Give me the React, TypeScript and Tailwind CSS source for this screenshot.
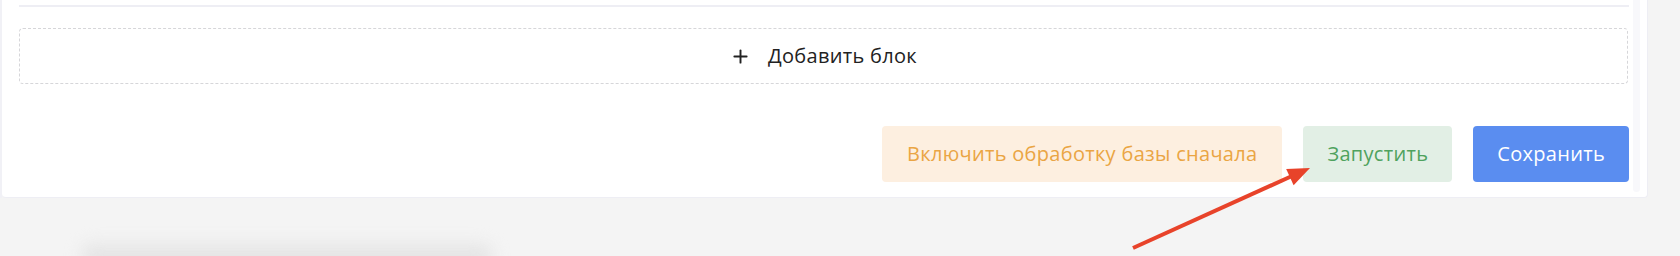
import { Plus } from "lucide-react";

const font = { fontFamily: '"Open Sans", "Noto Sans", sans-serif' };

export default function App() {
  return (
    <div className="relative h-[256px] overflow-hidden bg-[#f4f4f4]" style={font}>
      {/* left edge strip */}
      <div className="absolute left-0 top-0 h-[198px] w-[2px] bg-[#f1f1f6]" />

      {/* Card */}
      <div className="ml-[2px] flex h-[198px] w-[1646px] rounded-b-[4px] border-r border-b border-[#eeeef4] bg-white">
        <div className="flex w-[1628px] flex-col pl-[17px] pr-[1px]">
          <div className="mt-[5px] h-[2px] w-full bg-[#eeeef4]" />

          {/* Add block */}
          <button className="mt-[21px] flex h-[56px] w-[1609px] items-center justify-center gap-[17px] rounded-[4px] border border-dashed border-[#d6d6d9] text-[20px] tracking-[0.3px] text-[#222]">
            <Plus className="h-[21px] w-[21px]" strokeWidth={2.2} />
            <span>Добавить блок</span>
          </button>

          {/* Actions */}
          <div className="mt-[42px] flex justify-end gap-[21px]">
            <button className="h-[56px] rounded-[4px] bg-[#fdefe0] px-[25px] text-[20px] tracking-[0.3px] text-[#eaa544]">
              Включить обработку базы сначала
            </button>
            <button className="h-[56px] rounded-[4px] bg-[#e2efe5] px-[24px] text-[20px] tracking-[0.3px] text-[#4fa25e]">
              Запустить
            </button>
            <button className="h-[56px] rounded-[4px] bg-[#5a8df0] px-[24px] text-[20px] tracking-[0.3px] text-white">
              Сохранить
            </button>
          </div>
        </div>

        {/* scrollbar track */}
        <div className="ml-[3px] mb-[5px] w-[7px] rounded-b-[4px] bg-[#f8f8fb]" />
      </div>

      {/* blurred next element */}
      <div className="ml-[82px] mt-[46px] h-[26px] w-[410px] rounded-[10px] bg-[#e5e5e5] blur-[8px]" />

      {/* annotation arrow */}
      <svg
        className="absolute left-[1120px] top-[160px]"
        width="200"
        height="96"
        viewBox="0 0 200 96"
      >
        <line x1="13" y1="88" x2="172" y2="16" stroke="#e8432a" strokeWidth="4" strokeLinecap="butt" />
        <polygon points="190,8 173.6,25.3 166.2,8.9" fill="#e8432a" />
      </svg>
    </div>
  );
}
